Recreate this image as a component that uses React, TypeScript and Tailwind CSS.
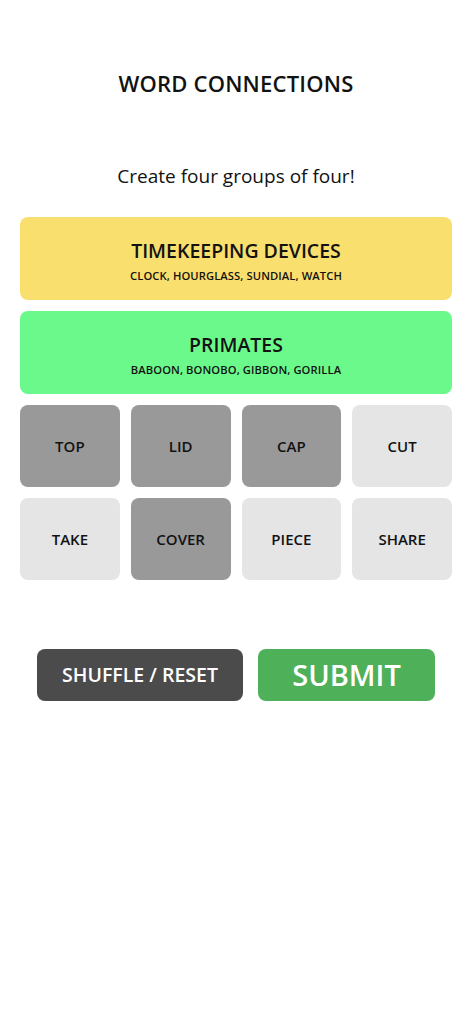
const font = { fontFamily: '"Open Sans", "Noto Sans", sans-serif' };

type Tile = { word: string; selected: boolean };

const groups = [
  { title: "TIMEKEEPING DEVICES", words: "CLOCK, HOURGLASS, SUNDIAL, WATCH", color: "bg-[#f9df6d]" },
  { title: "PRIMATES", words: "BABOON, BONOBO, GIBBON, GORILLA", color: "bg-[#6cf98b]" },
];

const tiles: Tile[] = [
  { word: "TOP", selected: true },
  { word: "LID", selected: true },
  { word: "CAP", selected: true },
  { word: "CUT", selected: false },
  { word: "TAKE", selected: false },
  { word: "COVER", selected: true },
  { word: "PIECE", selected: false },
  { word: "SHARE", selected: false },
];

export default function App() {
  return (
    <div className="min-h-screen bg-white text-[#121212]" style={font}>
      <div className="flex flex-col items-center px-5 pt-[68px]">
        <h1 className="text-[22px] leading-[30px] font-semibold tracking-[0.2px]">WORD CONNECTIONS</h1>
        <p className="mt-[64px] text-[19px] leading-[28px] font-medium">Create four groups of four!</p>

        <div className="mt-[27px] flex w-full flex-col gap-[11px]">
          {groups.map((g) => (
            <div
              key={g.title}
              className={`flex h-[83px] flex-col items-center justify-center rounded-lg pt-[5px] ${g.color}`}
            >
              <div className="text-[19.5px] leading-[24px] font-semibold">{g.title}</div>
              <div className="mt-[5px] text-[11.2px] leading-[16px] font-semibold tracking-[0.1px]">{g.words}</div>
            </div>
          ))}

          <div className="grid grid-cols-4 gap-[11px]">
            {tiles.map((t) => (
              <div
                key={t.word}
                className={`flex h-[82px] items-center justify-center rounded-lg text-[15px] font-semibold ${
                  t.selected ? "bg-[#999999]" : "bg-[#e5e5e5]"
                }`}
              >
                {t.word}
              </div>
            ))}
          </div>
        </div>

        <div className="mt-[69px] flex gap-[15px]">
          <button className="h-[52px] w-[206px] rounded-lg bg-[#4b4b4b] text-[19.5px] font-semibold text-white">
            SHUFFLE / RESET
          </button>
          <button className="h-[52px] w-[177px] rounded-lg bg-[#4fb05a] text-[29px] font-semibold text-white">
            SUBMIT
          </button>
        </div>
      </div>
    </div>
  );
}
